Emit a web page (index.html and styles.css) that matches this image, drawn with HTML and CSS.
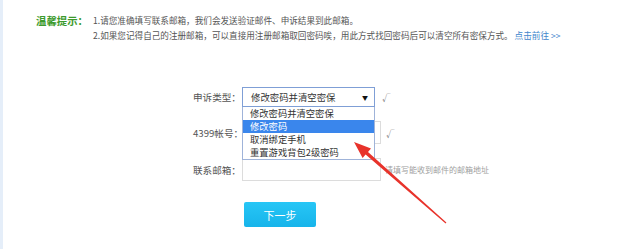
FILE: index.html
```html
<!DOCTYPE html>
<html lang="zh-CN">
<head>
  <meta charset="UTF-8">
  <title>密码申诉</title>
  <link rel="stylesheet" href="styles.css">
</head>
<body>
  <div class="page">
    <div class="tips">
      <div class="tips-title">温馨提示：</div>
      <div class="tips-text">
        <p>1.请您准确填写联系邮箱，我们会发送验证邮件、申诉结果到此邮箱。</p>
        <p>2.如果您记得自己的注册邮箱，可以直接用注册邮箱取回密码唉，用此方式找回密码后可以清空所有密保方式。 <a class="link" href="#">点击前往 &gt;&gt;</a></p>
      </div>
    </div>

    <div class="form">
      <div class="row row-type">
        <label>申诉类型：</label>
        <div class="select-wrap">
          <div class="select">
            <span>修改密码并清空密保</span>
            <span class="caret">▼</span>
          </div>
          <ul class="options">
            <li>修改密码并清空密保</li>
            <li class="active">修改密码</li>
            <li>取消绑定手机</li>
            <li>重置游戏背包2级密码</li>
          </ul>
        </div>
        <span class="ok">√</span>
      </div>
      <div class="row row-account">
        <label>4399帐号：</label>
        <input class="field" type="text">
        <span class="ok">√</span>
      </div>
      <div class="row row-mail">
        <label>联系邮箱：</label>
        <input class="field field-mail" type="text">
        <span class="hint">请填写能收到邮件的邮箱地址</span>
      </div>
      <button class="next">下一步</button>
    </div>

    <svg class="arrow" width="620" height="249" viewBox="0 0 620 249">
      <polygon points="354,142 371,148.5 368,152 446.4,222.5 445.6,223.5 365.6,154.6 362.6,158" fill="#e8332b"/>
    </svg>
  </div>
</body>
</html>
```

FILE: styles.css
```css
* {
  margin: 0;
  padding: 0;
  box-sizing: border-box;
}
body {
  font-family: "Noto Sans CJK SC", "Liberation Sans", sans-serif;
  background: #fff;
  color: #555;
  width: 620px;
  height: 249px;
  overflow: hidden;
}
.page {
  position: relative;
  height: 249px;
  border-left: 3px solid #e5eef9;
}
.tips {
  display: flex;
  padding: 13px 0 0 33px;
}
.tips-title {
  width: 57px;
  font-size: 10.4px;
  line-height: 15px;
  font-weight: bold;
  color: #3c9a2c;
}
.tips-text {
  font-size: 8.6px;
  line-height: 15px;
  color: #555;
}
.link {
  color: #3f86cc;
  text-decoration: none;
}
.form {
  display: flex;
  flex-direction: column;
  margin: 44px 0 0 190px;
}
.row {
  display: flex;
  align-items: center;
  font-size: 9.6px;
}
.row label {
  width: 49px;
  color: #555;
  white-space: nowrap;
}
.row-account {
  margin-top: 14px;
}
.row-mail {
  margin-top: 14px;
}
.select-wrap {
  position: relative;
}
.select {
  width: 133px;
  height: 20px;
  border: 1px solid #7f9fd6;
  display: flex;
  align-items: center;
  justify-content: space-between;
  padding: 0 6px 0 8px;
  font-size: 9.4px;
  color: #333;
}
.caret {
  font-size: 6px;
  color: #111;
}
.options {
  position: absolute;
  top: 100%;
  left: 0;
  width: 133px;
  list-style: none;
  background: #fff;
  border: 1px solid #9fb3d9;
  border-top: none;
  z-index: 2;
}
.options li {
  height: 13px;
  line-height: 13px;
  padding-left: 7px;
  font-size: 9.3px;
  color: #333;
}
.options li.active {
  background: #3a86ec;
  color: #fff;
}
.ok {
  margin-left: 7px;
  font-size: 8.5px;
  color: #777;
}
.field {
  width: 139px;
  height: 23px;
  border: 1px solid #dcdcdc;
  background: #fff;
}
.row-account .ok {
  margin-left: 5px;
}
.hint {
  margin-left: 4px;
  font-size: 8px;
  color: #a0a0a0;
}
.next {
  margin: 21px 0 0 51px;
  width: 72px;
  height: 25px;
  border: none;
  border-radius: 2px;
  background: linear-gradient(#27c6f6, #17b4ea);
  color: #fff;
  font-family: "Noto Sans CJK SC", sans-serif;
  font-size: 11px;
}
.arrow {
  position: absolute;
  top: 0;
  left: -3px;
  pointer-events: none;
  z-index: 3;
}
```
